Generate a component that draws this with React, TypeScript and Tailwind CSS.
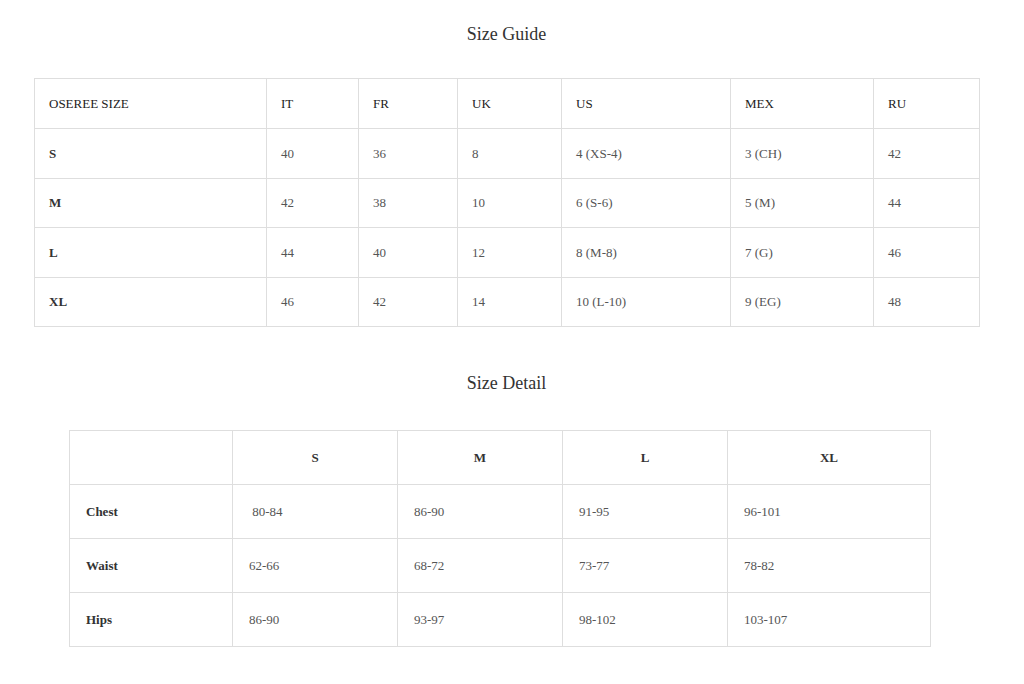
const guideCols = [232, 92, 99, 104, 169, 143, 106];
const guideHead = ["OSEREE SIZE", "IT", "FR", "UK", "US", "MEX", "RU"];
const guideRows = [
  ["S", "40", "36", "8", "4 (XS-4)", "3 (CH)", "42"],
  ["M", "42", "38", "10", "6 (S-6)", "5 (M)", "44"],
  ["L", "44", "40", "12", "8 (M-8)", "7 (G)", "46"],
  ["XL", "46", "42", "14", "10 (L-10)", "9 (EG)", "48"],
];

const detailCols = [163, 165, 165, 165, 203];
const detailHead = ["", "S", "M", "L", "XL"];
const detailRows = [
  ["Chest", "\u00a080-84", "86-90", "91-95", "96-101"],
  ["Waist", "62-66", "68-72", "73-77", "78-82"],
  ["Hips", "86-90", "93-97", "98-102", "103-107"],
];

function Title({ children }: { children: string }) {
  return (
    <h2 className="w-[1013px] text-center text-[18px] leading-[28px] text-[#333]">{children}</h2>
  );
}

export default function App() {
  return (
    <div className="min-h-[684px] bg-white pt-[20px] font-['Liberation_Serif',serif]">
      <Title>Size Guide</Title>

      <div className="mt-[30px] pl-[34px]">
        <table className="table-fixed border-collapse border border-[#dedede] text-[13px]">
          <colgroup>
            {guideCols.map((w, i) => (
              <col key={i} style={{ width: w }} />
            ))}
          </colgroup>
          <thead>
            <tr className="h-[50px]">
              {guideHead.map((h) => (
                <th key={h} className="border border-[#dedede] pl-[14px] text-left font-normal text-[#222]">
                  {h}
                </th>
              ))}
            </tr>
          </thead>
          <tbody>
            {guideRows.map((row) => (
              <tr key={row[0]} className="h-[49.5px]">
                {row.map((c, i) => (
                  <td
                    key={i}
                    className={
                      i === 0
                        ? "border border-[#dedede] pl-[14px] font-bold text-[#333]"
                        : "border border-[#dedede] pl-[14px] text-[#555]"
                    }
                  >
                    {c}
                  </td>
                ))}
              </tr>
            ))}
          </tbody>
        </table>
      </div>

      <div className="mt-[42px]">
        <Title>Size Detail</Title>
      </div>

      <div className="mt-[33px] pl-[69px]">
        <table className="table-fixed border-collapse border border-[#dedede] text-[13px]">
          <colgroup>
            {detailCols.map((w, i) => (
              <col key={i} style={{ width: w }} />
            ))}
          </colgroup>
          <thead>
            <tr className="h-[54px]">
              {detailHead.map((h, i) => (
                <th key={i} className="border border-[#dedede] text-center font-bold text-[#333]">
                  {h}
                </th>
              ))}
            </tr>
          </thead>
          <tbody>
            {detailRows.map((row) => (
              <tr key={row[0]} className="h-[54px]">
                {row.map((c, i) => (
                  <td
                    key={i}
                    className={
                      i === 0
                        ? "border border-[#dedede] pl-[16px] font-bold text-[#333]"
                        : "border border-[#dedede] pl-[16px] text-[#555]"
                    }
                  >
                    {c}
                  </td>
                ))}
              </tr>
            ))}
          </tbody>
        </table>
      </div>
    </div>
  );
}
